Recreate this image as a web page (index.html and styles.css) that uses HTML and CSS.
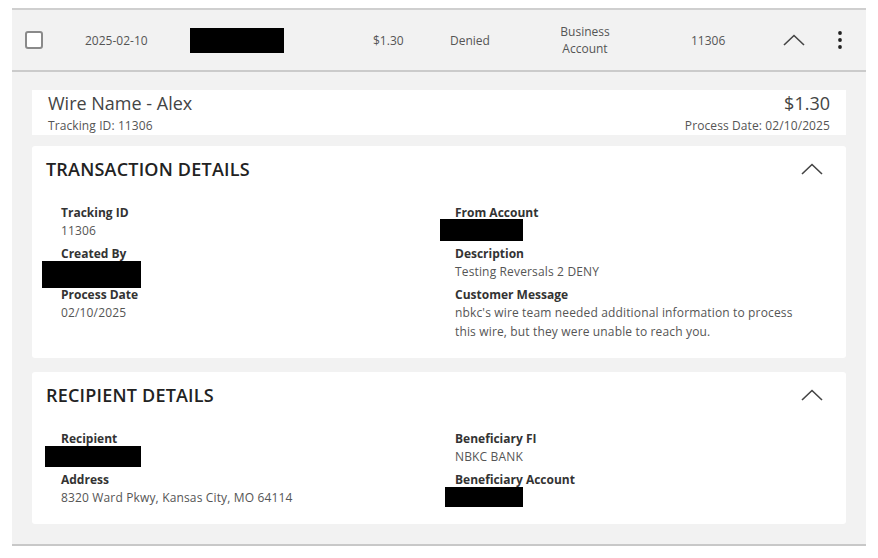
FILE: index.html
```html
<!DOCTYPE html>
<html lang="en">
<head>
<meta charset="utf-8">
<title>Wire Transaction</title>
<link rel="stylesheet" href="styles.css">
</head>
<body>
<div class="txn">
  <div class="txn-head">
    <div class="cell cell-check"><span class="checkbox"></span></div>
    <div class="cell">2025-02-10</div>
    <div class="cell"><span class="redact redact-name"></span></div>
    <div class="cell">$1.30</div>
    <div class="cell">Denied</div>
    <div class="cell cell-center">Business<br>Account</div>
    <div class="cell cell-id">11306</div>
    <div class="cell cell-center">
      <svg class="chev" width="22" height="12" viewBox="0 0 22 12"><path d="M1 11 L11 1.5 L21 11" fill="none" stroke="#444" stroke-width="1.6"/></svg>
    </div>
    <div class="cell cell-center">
      <svg width="6" height="20" viewBox="0 0 6 20"><circle cx="3" cy="3" r="1.9" fill="#222"/><circle cx="3" cy="10" r="1.9" fill="#222"/><circle cx="3" cy="17" r="1.9" fill="#222"/></svg>
    </div>
  </div>

  <div class="txn-body">
    <div class="summary">
      <div class="summary-left">
        <div class="summary-title">Wire Name - Alex</div>
        <div class="summary-sub">Tracking ID: 11306</div>
      </div>
      <div class="summary-right">
        <div class="summary-title">$1.30</div>
        <div class="summary-sub">Process Date: 02/10/2025</div>
      </div>
    </div>

    <section class="card">
      <div class="card-head">
        <h2 class="card-title">TRANSACTION DETAILS</h2>
        <svg class="chev" width="22" height="12" viewBox="0 0 22 12"><path d="M1 11 L11 1.5 L21 11" fill="none" stroke="#444" stroke-width="1.6"/></svg>
      </div>
      <div class="fields">
        <div class="col">
          <div class="field">
            <div class="label">Tracking ID</div>
            <div class="value">11306</div>
          </div>
          <div class="field">
            <div class="label">Created By</div>
            <div class="redact redact-created"></div>
          </div>
          <div class="field">
            <div class="label">Process Date</div>
            <div class="value">02/10/2025</div>
          </div>
        </div>
        <div class="col">
          <div class="field">
            <div class="label">From Account</div>
            <div class="redact redact-from"></div>
          </div>
          <div class="field">
            <div class="label">Description</div>
            <div class="value">Testing Reversals 2 DENY</div>
          </div>
          <div class="field">
            <div class="label">Customer Message</div>
            <div class="value value-msg">nbkc's wire team needed additional information to process this wire, but they were unable to reach you.</div>
          </div>
        </div>
      </div>
    </section>

    <section class="card">
      <div class="card-head">
        <h2 class="card-title">RECIPIENT DETAILS</h2>
        <svg class="chev" width="22" height="12" viewBox="0 0 22 12"><path d="M1 11 L11 1.5 L21 11" fill="none" stroke="#444" stroke-width="1.6"/></svg>
      </div>
      <div class="fields">
        <div class="col">
          <div class="field">
            <div class="label">Recipient</div>
            <div class="redact redact-recipient"></div>
          </div>
          <div class="field">
            <div class="label">Address</div>
            <div class="value">8320 Ward Pkwy, Kansas City, MO 64114</div>
          </div>
        </div>
        <div class="col">
          <div class="field">
            <div class="label">Beneficiary FI</div>
            <div class="value">NBKC BANK</div>
          </div>
          <div class="field">
            <div class="label">Beneficiary Account</div>
            <div class="redact redact-benacct"></div>
          </div>
        </div>
      </div>
    </section>
  </div>
</div>
</body>
</html>
```

FILE: styles.css
```css
* { box-sizing: border-box; }

body {
  margin: 0;
  background: #ffffff;
  font-family: "Open Sans", "Noto Sans", sans-serif;
  color: #333;
}

.txn {
  margin: 8px 12px 0 12px;
  width: 854px;
  border-top: 2px solid #cfcfcf;
  border-bottom: 2px solid #c8c8c8;
  background: #f2f2f2;
}

.txn-head {
  display: grid;
  grid-template-columns: 73px 105px 183px 77px 90px 90px 144px 40px 52px;
  align-items: center;
  height: 62px;
  border-bottom: 2px solid #cbcbcb;
  font-size: 12px;
  color: #555;
}

.cell { line-height: 17px; }
.cell-check { padding-left: 13px; display: flex; align-items: center; }
.cell-center { text-align: center; display: flex; justify-content: center; align-items: center; }
.cell-id { padding-left: 61px; }

.checkbox {
  display: block;
  width: 18px;
  height: 18px;
  border: 2px solid #8a8a8a;
  border-radius: 3px;
  background: #fff;
}

.redact { background: #000; display: block; }
.redact-name { width: 94px; height: 25px; }

.chev { display: block; }

.txn-body {
  padding: 18px 20px 20px 20px;
}

.summary {
  display: flex;
  justify-content: space-between;
  background: #fff;
  height: 45px;
  padding: 1px 16px 0 16px;
}

.summary-title {
  font-size: 18px;
  line-height: 24px;
  color: #444;
}

.summary-sub {
  font-size: 12px;
  line-height: 17px;
  margin-top: 2px;
  color: #555;
  letter-spacing: 0.1px;
}

.summary-right { text-align: right; }

.card {
  background: #fff;
  border-radius: 3px;
  margin-top: 11px;
}
.card + .card { margin-top: 14px; }

.card-head {
  display: flex;
  justify-content: space-between;
  align-items: center;
  padding: 11px 23px 0 14px;
}

.card-title {
  margin: 0;
  font-size: 18px;
  line-height: 24px;
  font-weight: 600;
  color: #222;
  letter-spacing: 0.2px;
}

.fields {
  display: grid;
  grid-template-columns: 394px 1fr;
  padding: 23px 30px 12px 29px;
}

.field { margin-bottom: 5px; }

.label {
  font-size: 12px;
  line-height: 17px;
  font-weight: 700;
  color: #333;
}

.value {
  font-size: 12px;
  line-height: 19px;
  color: #555;
  letter-spacing: 0.15px;
}

.value-msg { max-width: 350px; }

.redact-created { width: 99px; height: 27px; margin: -1.5px 0 -6.5px -19px; }
.redact-from { width: 83px; height: 22px; margin: -2.5px 0 -0.5px -15px; }
.redact-recipient { width: 96px; height: 21px; margin: -1.5px 0 -0.5px -16px; }
.redact-benacct { width: 78px; height: 20px; margin: -1.5px 0 0.5px -10px; }
```
